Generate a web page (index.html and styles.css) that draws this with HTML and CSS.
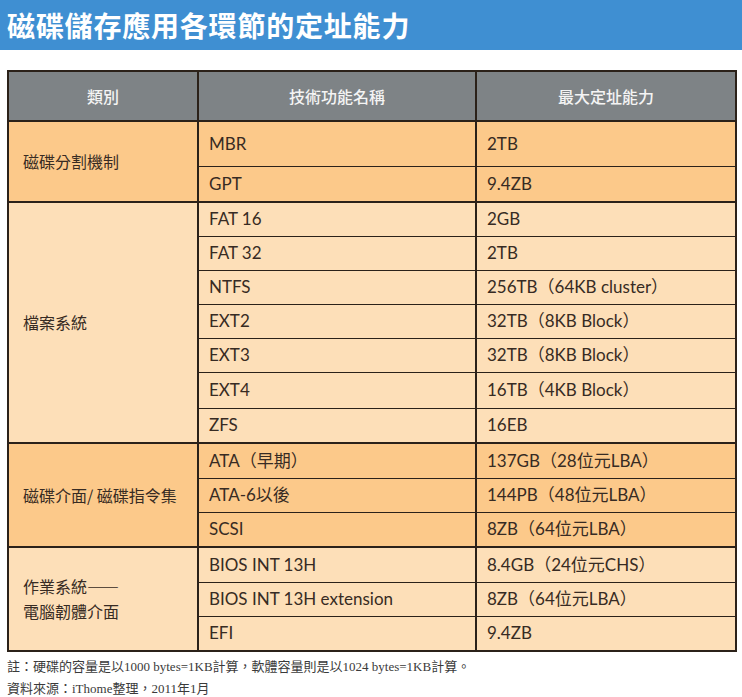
FILE: index.html
```html
<!DOCTYPE html>
<html lang="zh-Hant">
<head>
<meta charset="utf-8">
<title>磁碟儲存應用各環節的定址能力</title>
<link rel="stylesheet" href="styles.css">
</head>
<body>
<header class="title-bar"><h1 class="title">磁碟儲存應用各環節的定址能力</h1></header>
<main class="content">
<table class="spec">
<colgroup><col class="c1"><col class="c2"><col class="c3"></colgroup>
<thead>
<tr class="head"><th>類別</th><th>技術功能名稱</th><th>最大定址能力</th></tr>
</thead>
<tbody class="dark">
<tr class="r45 first"><td class="cat" rowspan="2">磁碟分割機制</td><td>MBR</td><td>2TB</td></tr>
<tr class="r36"><td>GPT</td><td>9.4ZB</td></tr>
</tbody>
<tbody class="light">
<tr class="r34 first"><td class="cat" rowspan="7">檔案系統</td><td>FAT 16</td><td>2GB</td></tr>
<tr class="r34"><td>FAT 32</td><td>2TB</td></tr>
<tr class="r34"><td>NTFS</td><td>256TB（64KB cluster）</td></tr>
<tr class="r34"><td>EXT2</td><td>32TB（8KB Block）</td></tr>
<tr class="r34"><td>EXT3</td><td>32TB（8KB Block）</td></tr>
<tr class="r36"><td>EXT4</td><td>16TB（4KB Block）</td></tr>
<tr class="r35"><td>ZFS</td><td>16EB</td></tr>
</tbody>
<tbody class="dark">
<tr class="r35 first"><td class="cat" rowspan="3">磁碟介面/ 磁碟指令集</td><td>ATA（早期）</td><td>137GB（28位元LBA）</td></tr>
<tr class="r34"><td>ATA-6以後</td><td>144PB（48位元LBA）</td></tr>
<tr class="r35"><td>SCSI</td><td>8ZB（64位元LBA）</td></tr>
</tbody>
<tbody class="light">
<tr class="r35 first"><td class="cat" rowspan="3">作業系統——<br>電腦韌體介面</td><td>BIOS INT 13H</td><td>8.4GB（24位元CHS）</td></tr>
<tr class="r34"><td>BIOS INT 13H extension</td><td>8ZB（64位元LBA）</td></tr>
<tr class="r35"><td>EFI</td><td>9.4ZB</td></tr>
</tbody>
</table>
<p class="note">註：硬碟的容量是以1000 bytes=1KB計算，軟體容量則是以1024 bytes=1KB計算。</p>
<p class="note">資料來源：iThome整理，2011年1月</p>
</main>
</body>
</html>
```
FILE: styles.css
```css
html, body {
  margin: 0;
  padding: 0;
  background: #ffffff;
}
.title-bar {
  height: 50px;
  background: #3f8fd2;
  display: flex;
  align-items: center;
  padding-left: 7px;
}
.title {
  margin: 0;
  color: #ffffff;
  font-family: "Noto Sans CJK TC", "Noto Sans", sans-serif;
  font-weight: 700;
  font-size: 28px;
  letter-spacing: 0.8px;
  line-height: 1;
}
.content {
  padding: 20px 7px 0 7px;
}
.spec {
  width: 728px;
  border-collapse: collapse;
  table-layout: fixed;
  border: 2px solid #2b2119;
  font-family: "Lato", "Noto Sans CJK TC", sans-serif;
  color: #372b23;
}
.c1 { width: 190px; }
.c2 { width: 278px; }
.c3 { width: 260px; }
.spec th {
  background: #7e8386;
  color: #f4f4f4;
  font-family: "Noto Sans CJK TC", sans-serif;
  font-weight: 500;
  font-size: 16px;
  height: 48px;
  padding: 0;
  text-align: center;
  border-left: 2px solid #2b2119;
  border-bottom: 2px solid #2b2119;
}
.spec td {
  font-size: 17px;
  padding: 0 0 0 10px;
  border-left: 2px solid #2b2119;
  border-top: 1px solid #2b2119;
  vertical-align: middle;
  line-height: 1.2;
}
.spec tr.first td { border-top: 2px solid #2b2119; }
.spec td.cat {
  font-family: "Noto Sans CJK TC", sans-serif;
  font-weight: 400;
  font-size: 16px;
  padding-left: 14px;
  line-height: 25px;
}
.dark td { background: #fcc98a; }
.light td { background: #fddfb8; }
.r34 { height: 34px; }
.r35 { height: 35px; }
.r36 { height: 36px; }
.r45 { height: 45px; }
.note {
  margin: 0;
  font-family: "Liberation Serif", "Noto Sans CJK TC", serif;
  font-size: 13px;
  line-height: 22px;
  color: #3a3a3a;
}
.note:first-of-type { margin-top: 4px; }
```
